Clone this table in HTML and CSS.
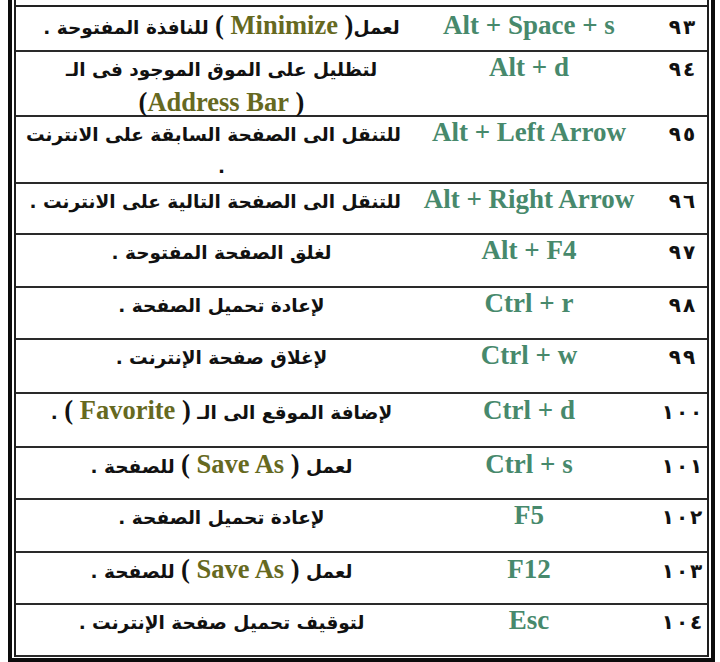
FILE: index.html
```html
<!DOCTYPE html>
<html lang="ar">
<head>
<meta charset="utf-8">
<title>اختصارات لوحة المفاتيح</title>
<link rel="stylesheet" href="styles.css">
</head>
<body>
<div class="sheet">
  <div class="table">
    <div class="stub"></div>

    <div class="row first">
      <div class="desc" dir="rtl">لعمل<span class="en">( <span class="hl">Minimize</span> )</span> للنافذة المفتوحة .</div>
      <div class="key">Alt + Space + s</div>
      <div class="num"><span>٩</span><span>٣</span></div>
    </div>

    <div class="row">
      <div class="desc" dir="rtl">لتظليل على الموق الموجود فى الـ<br><span class="en">( <span class="hl">Address Bar</span>)</span></div>
      <div class="key">Alt + d</div>
      <div class="num"><span>٩</span><span>٤</span></div>
    </div>

    <div class="row">
      <div class="desc" dir="rtl">للتنقل الى الصفحة السابقة على الانترنت<br>.</div>
      <div class="key">Alt + Left Arrow</div>
      <div class="num"><span>٩</span><span>٥</span></div>
    </div>

    <div class="row">
      <div class="desc" dir="rtl">للتنقل الى الصفحة التالية على الانترنت .</div>
      <div class="key">Alt + Right Arrow</div>
      <div class="num"><span>٩</span><span>٦</span></div>
    </div>

    <div class="row">
      <div class="desc" dir="rtl">لغلق الصفحة المفتوحة .</div>
      <div class="key">Alt + F4</div>
      <div class="num"><span>٩</span><span>٧</span></div>
    </div>

    <div class="row">
      <div class="desc" dir="rtl">لإعادة تحميل الصفحة .</div>
      <div class="key">Ctrl + r</div>
      <div class="num"><span>٩</span><span>٨</span></div>
    </div>

    <div class="row">
      <div class="desc" dir="rtl">لإغلاق صفحة الإنترنت .</div>
      <div class="key">Ctrl + w</div>
      <div class="num"><span>٩</span><span>٩</span></div>
    </div>

    <div class="row">
      <div class="desc" dir="rtl">لإضافة الموقع الى الـ <span class="en">( <span class="hl">Favorite</span> )</span> .</div>
      <div class="key">Ctrl + d</div>
      <div class="num"><span>١</span><span>٠</span><span>٠</span></div>
    </div>

    <div class="row">
      <div class="desc" dir="rtl">لعمل <span class="en">( <span class="hl">Save As</span> )</span> للصفحة .</div>
      <div class="key">Ctrl + s</div>
      <div class="num"><span>١</span><span>٠</span><span>١</span></div>
    </div>

    <div class="row">
      <div class="desc" dir="rtl">لإعادة تحميل الصفحة .</div>
      <div class="key">F5</div>
      <div class="num"><span>١</span><span>٠</span><span>٢</span></div>
    </div>

    <div class="row">
      <div class="desc" dir="rtl">لعمل <span class="en">( <span class="hl">Save As</span> )</span> للصفحة .</div>
      <div class="key">F12</div>
      <div class="num"><span>١</span><span>٠</span><span>٣</span></div>
    </div>

    <div class="row">
      <div class="desc" dir="rtl">لتوقيف تحميل صفحة الإنترنت .</div>
      <div class="key">Esc</div>
      <div class="num"><span>١</span><span>٠</span><span>٤</span></div>
    </div>
  </div>
</div>
</body>
</html>
```

FILE: styles.css
```css
html, body {
  margin: 0;
  padding: 0;
  background: #ffffff;
}

body {
  width: 720px;
  height: 662px;
  overflow: hidden;
}

.sheet {
  margin-left: 8px;
  width: 707px;
  box-sizing: border-box;
  border-left: 4px solid #0c0c0c;
  border-right: 4px solid #0c0c0c;
  border-bottom: 5px solid #0c0c0c;
  padding: 0 2px 1px 2px;
}

.table {
  display: grid;
  grid-template-rows: 7px 45px 65px 67px 51px 53px 52px 54px 54px 52px 53px 52px 52px;
  border-left: 2px solid #1e1e1e;
  border-right: 2px solid #1e1e1e;
}

.stub {
  border-bottom: 2px solid #222;
}

.row {
  display: grid;
  grid-template-columns: 409px 208px 74px;
  align-items: baseline;
  border-bottom: 2px solid #2a2a2a;
  box-sizing: border-box;
  min-height: 0;
}

.row.first {
  padding-top: 2px;
}

.desc {
  font-family: "DejaVu Sans", "Noto Sans", sans-serif;
  font-weight: bold;
  font-size: 18.5px;
  line-height: 32px;
  color: #111;
  text-align: center;
  white-space: nowrap;
  padding: 0 24px 0 26px;
}

.en {
  font-family: "Liberation Serif", "Times New Roman", serif;
  font-weight: bold;
  font-size: 26.5px;
  color: #111;
}

.hl {
  color: #66691f;
}

.key {
  display: flex;
  justify-content: center;
  font-family: "Liberation Serif", "Times New Roman", serif;
  font-weight: bold;
  font-size: 27px;
  line-height: 30px;
  color: #47896c;
  white-space: nowrap;
}

.num {
  display: flex;
  justify-content: center;
  gap: 2px;
  font-family: "DejaVu Sans", sans-serif;
  font-weight: bold;
  font-size: 20px;
  color: #111;
  padding-left: 24px;
  direction: ltr;
}
```
